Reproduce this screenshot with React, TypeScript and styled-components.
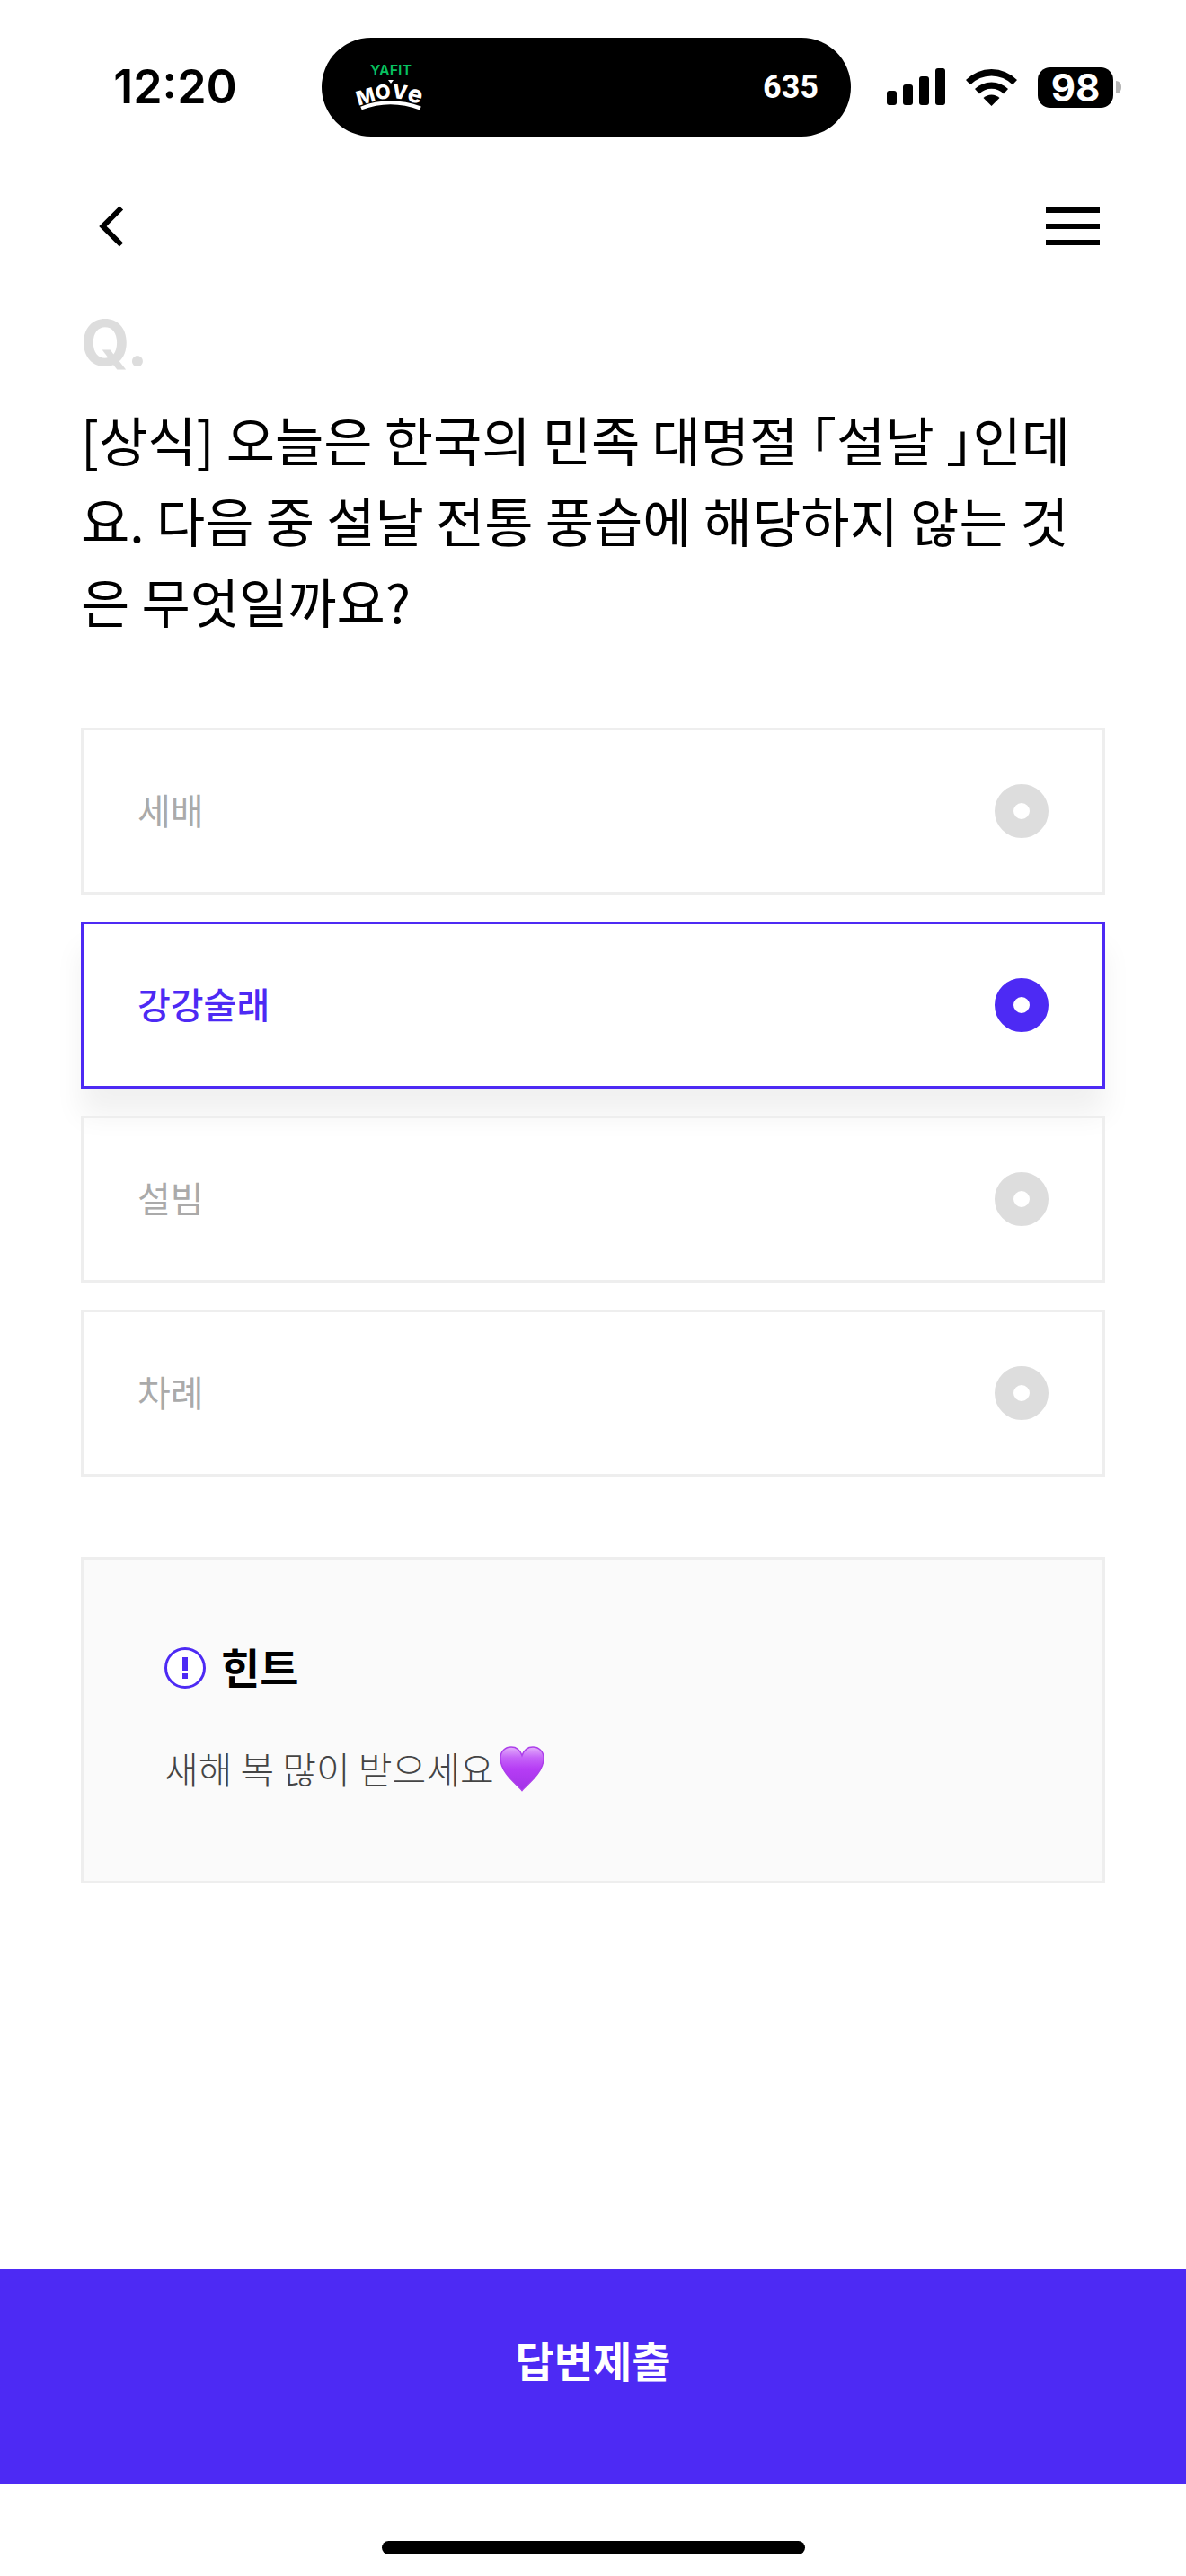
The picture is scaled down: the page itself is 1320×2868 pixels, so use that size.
import React, { useState } from "react";
import styled, { createGlobalStyle } from "styled-components";

const violet = "#4d2af4";
const korean = `"Noto Sans CJK KR", "Noto Sans", sans-serif`;

const GlobalStyle = createGlobalStyle`
  *, *::before, *::after { box-sizing: border-box; }
  body { margin: 0; background: #fff; color: #000; font-family: ${korean}; }
`;

const Screen = styled.div`
  display: flex;
  flex-direction: column;
  min-height: 100vh;
`;

const StatusBar = styled.div`
  display: grid;
  grid-template-columns: 24fr 589px 25fr;
  align-items: center;
  padding-top: 42px;
  font-family: Inter, sans-serif;
`;

const Time = styled.time`
  padding-left: 32px;
  text-align: center;
  font-size: 52px;
  font-weight: 600;
  line-height: 60px;
`;

const Island = styled.div`
  display: flex;
  align-items: center;
  justify-content: space-between;
  height: 110px;
  padding: 0 36px;
  border-radius: 55px;
  background: #000;
  color: #fff;
`;

const Steps = styled.span`
  font-family: Roboto, sans-serif;
  font-size: 36px;
  font-weight: 700;
`;

const Indicators = styled.div`
  display: flex;
  align-items: center;
  gap: 23px;
  padding-left: 40px;
`;

const Battery = styled.div`
  display: flex;
  align-items: center;
  gap: 3px;
`;

const BatteryLevel = styled.span`
  width: 84px;
  border-radius: 14px;
  background: #000;
  color: #fff;
  text-align: center;
  font-size: 42px;
  font-weight: 700;
  line-height: 45px;
`;

const BatteryTip = styled.span`
  width: 6px;
  height: 14px;
  border-radius: 0 7px 7px 0;
  background: #b5b5b5;
`;

const NavBar = styled.header`
  display: flex;
  align-items: center;
  justify-content: space-between;
  height: 200px;
  padding: 0 96px 0 90px;
`;

const IconButton = styled.button`
  display: flex;
  padding: 0;
  border: 0;
  background: none;
  color: #000;
  cursor: pointer;
`;

const Content = styled.main`
  flex: 1;
  padding: 0 90px 60px;
`;

const QuestionMark = styled.p`
  margin: 0 0 32px;
  color: #ddd;
  font-family: Inter, sans-serif;
  font-size: 70px;
  font-weight: 700;
  line-height: 60px;
`;

const Question = styled.h1`
  margin: 0 0 96px;
  font-size: 59px;
  font-weight: 400;
  line-height: 90px;
  font-feature-settings: "halt";
`;

const Options = styled.fieldset`
  display: flex;
  flex-direction: column;
  gap: 30px;
  margin: 0 0 90px;
  padding: 0;
  border: 0;
`;

const Option = styled.label<{ $selected: boolean }>`
  display: flex;
  align-items: center;
  justify-content: space-between;
  height: 186px;
  padding: 0 60px;
  border: 3px solid ${(p) => (p.$selected ? violet : "#eee")};
  box-shadow: ${(p) => (p.$selected ? "0 30px 30px rgba(0, 0, 0, 0.06)" : "none")};
  color: ${(p) => (p.$selected ? violet : "#aaa")};
  font-size: 40px;
  font-weight: ${(p) => (p.$selected ? 500 : 400)};
  cursor: pointer;
`;

const Caption = styled.span`
  padding-bottom: 5px;
`;

const Radio = styled.input`
  appearance: none;
  width: 60px;
  height: 60px;
  margin: 0;
  border: 21px solid #ddd;
  border-radius: 50%;
  background: #fff;

  &:checked {
    border-color: ${violet};
  }
`;

const Hint = styled.section`
  padding: 82px 90px 89px;
  border: 3px solid #eee;
  background: #fafafa;
`;

const HintTitle = styled.h2`
  display: flex;
  align-items: center;
  gap: 17px;
  height: 76px;
  margin: 0 0 37px;
  font-size: 47px;
  font-weight: 700;
`;

const HintText = styled.p`
  display: flex;
  align-items: center;
  gap: 4px;
  margin: 0;
  color: #444;
  font-size: 41px;
  font-weight: 300;
  line-height: 73px;
`;

const Submit = styled.button`
  height: 240px;
  padding: 0 0 40px;
  border: 0;
  background: ${violet};
  color: #fff;
  font-family: ${korean};
  font-size: 47px;
  font-weight: 700;
  cursor: pointer;
`;

const HomeArea = styled.div`
  display: flex;
  justify-content: center;
  padding: 63px 0 24px;
`;

const HomeBar = styled.div`
  width: 471px;
  height: 15px;
  border-radius: 8px;
  background: #000;
`;

function YafitLogo() {
  return (
    <svg width="84" height="72" viewBox="0 -10 84 72" role="img" aria-label="YAFIT MOVE">
      <g fontFamily="Inter, sans-serif" textAnchor="middle">
        <text x="41" y="13" fontSize="16" fontWeight="600" fill="#07c160">YAFIT</text>
        <g fill="#fff" fontSize="22" fontWeight="800">
          <text transform="translate(15 44) rotate(-16)">M</text>
          <text transform="translate(33 39) rotate(-6)">O</text>
          <text transform="translate(50 39) rotate(8)">V</text>
          <text transform="translate(66 43) rotate(14)" fontSize="27">e</text>
        </g>
      </g>
      <path d="M8 49.500Q40 37 74 49.500" fill="none" stroke="#fff" strokeWidth="4" />
      <path d="M38 18h6l-3 4z" fill="#fff" />
    </svg>
  );
}

function SignalIcon() {
  return (
    <svg width="65" height="42" viewBox="0 0 65 42" aria-hidden="true">
      <rect x="0" y="25" width="11" height="16" rx="3" />
      <rect x="18" y="18" width="11" height="23" rx="3" />
      <rect x="36" y="9" width="11" height="32" rx="3" />
      <rect x="54" y="0" width="11" height="41" rx="3" />
    </svg>
  );
}

function WifiIcon() {
  return (
    <svg width="57" height="42" viewBox="0 0 57 42" aria-hidden="true">
      <path d="M0 13A40 40 0 0 1 57 13L52 18.300A33 33 0 0 0 5 18.300Z" />
      <path d="M10 23A26.500 26.500 0 0 1 47 23L42 28.500A19 19 0 0 0 15 28.500Z" />
      <path d="M19.500 33A13 13 0 0 1 37.500 33L28.500 42Z" />
    </svg>
  );
}

function HintIcon() {
  return (
    <svg width="46" height="46" viewBox="0 0 46 46" aria-hidden="true">
      <circle cx="23" cy="23" r="21.500" fill="#fff" stroke={violet} strokeWidth="3" />
      <path d="M20 11h6v15h-6zM20 29h6v6h-6z" fill={violet} />
    </svg>
  );
}

function PurpleHeart() {
  return (
    <svg width="54" height="52" viewBox="0 0 54 52" role="img" aria-label="보라색 하트">
      <defs>
        <linearGradient id="heart" x1="0" y1="0" x2="0" y2="1">
          <stop offset="0" stopColor="#e3b0fb" />
          <stop offset="0.250" stopColor="#c563f8" />
          <stop offset="0.500" stopColor="#b63df5" />
          <stop offset="1" stopColor="#a232e6" />
        </linearGradient>
      </defs>
      <path
        d="M27 50.500C22 44 3 31 3 14.500C3 6.500 8.500 2 15 2C21 2 25 6 27 11.500C29 6 33 2 39 2C45.500 2 51 6.500 51 14.500C51 31 32 44 27 50.500Z"
        fill="url(#heart)"
        stroke="#ac3eea"
        strokeWidth="1.500"
      />
    </svg>
  );
}

const answers = ["세배", "강강술래", "설빔", "차례"];

export default function App() {
  const [selected, setSelected] = useState("강강술래");

  return (
    <Screen>
      <GlobalStyle />
      <StatusBar>
        <Time>12:20</Time>
        <Island>
          <YafitLogo />
          <Steps>635</Steps>
        </Island>
        <Indicators>
          <SignalIcon />
          <WifiIcon />
          <Battery>
            <BatteryLevel>98</BatteryLevel>
            <BatteryTip />
          </Battery>
        </Indicators>
      </StatusBar>
      <NavBar>
        <IconButton type="button" aria-label="뒤로">
          <svg width="60" height="60" viewBox="0 0 60 60" fill="none" stroke="currentColor" strokeWidth="6">
            <path d="M45 9.500L24.500 30L45 50.500" />
          </svg>
        </IconButton>
        <IconButton type="button" aria-label="메뉴">
          <svg width="60" height="42" viewBox="0 0 60 42" fill="currentColor">
            <path d="M0 0h60v6H0zM0 18h60v6H0zM0 36h60v6H0z" />
          </svg>
        </IconButton>
      </NavBar>
      <Content>
        <QuestionMark>Q.</QuestionMark>
        <Question>
          [상식] 오늘은 한국의 민족 대명절 「설날 」인데요. 다음 중 설날 전통 풍습에 해당하지 않는 것은 무엇일까요?
        </Question>
        <Options>
          {answers.map((answer) => (
            <Option key={answer} $selected={answer === selected}>
              <Caption>{answer}</Caption>
              <Radio
                type="radio"
                name="answer"
                value={answer}
                checked={answer === selected}
                onChange={() => setSelected(answer)}
              />
            </Option>
          ))}
        </Options>
        <Hint>
          <HintTitle>
            <HintIcon />
            <Caption>힌트</Caption>
          </HintTitle>
          <HintText>
            새해 복 많이 받으세요
            <PurpleHeart />
          </HintText>
        </Hint>
      </Content>
      <Submit type="button">답변제출</Submit>
      <HomeArea>
        <HomeBar />
      </HomeArea>
    </Screen>
  );
}
